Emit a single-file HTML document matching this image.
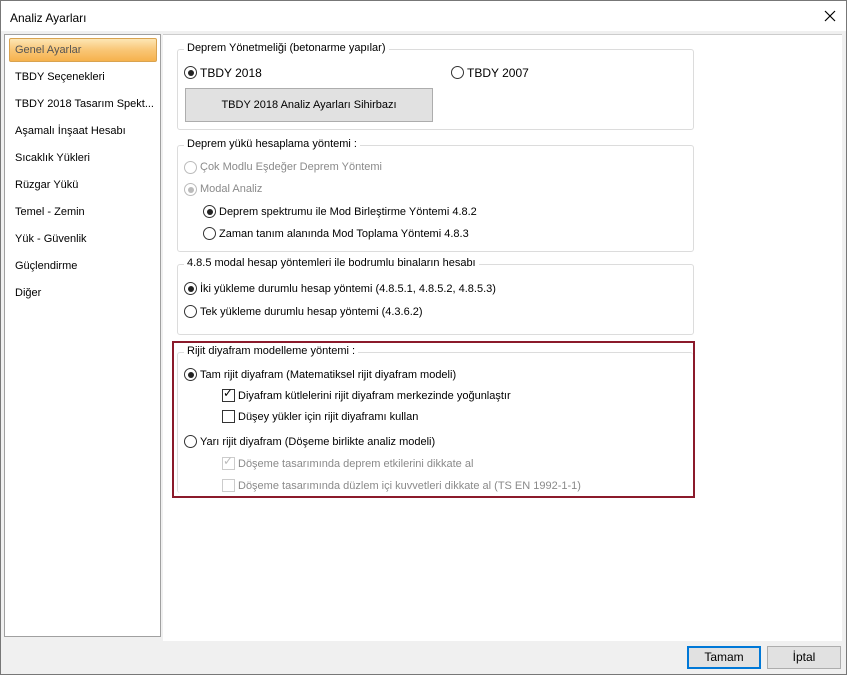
<!DOCTYPE html><html><head><style>
body{margin:0;width:847px;height:675px;overflow:hidden;background:#f0f0f0;font-family:"Liberation Sans",sans-serif;font-size:11px;color:#000;position:relative}
.a{position:absolute}
.win{left:0;top:0;width:845px;height:673px;border:1px solid #777;background:#f0f0f0}
.title{left:1px;top:1px;width:845px;height:30px;background:#fff}
.side{left:4px;top:34px;width:155px;height:601px;background:#fff;border:1px solid #a0a0a0}
.si{position:absolute;left:10px;font-size:11px;white-space:nowrap}
.sel{left:4px;top:3px;width:146px;height:22px;border:1px solid #d9a350;border-radius:2px;background:linear-gradient(#fde6b5,#f9c676 50%,#f6b24d)}
.main{left:163px;top:34px;width:679px;height:606px;background:#fff;border-top:1px solid #ccc}
.g{position:absolute;border:1px solid #dcdcdc;border-radius:3px}
.gt{position:absolute;top:-8px;left:6px;background:#fff;padding:0 3px}
.r{position:absolute;width:11px;height:11px;border:1px solid #333;border-radius:50%;background:#fff}
.r.on::after{content:"";position:absolute;left:2.5px;top:2.5px;width:6px;height:6px;border-radius:50%;background:#222}
.r.dis{border-color:#bbb}.r.dis.on::after{background:#bbb}
.c{position:absolute;width:11px;height:11px;border:1px solid #333;background:#fff}
.c.dis{border-color:#ccc}
.t{position:absolute;white-space:nowrap}
.d{color:#8a8a8a}
.btn{position:absolute;background:#e1e1e1;border:1px solid #adadad;text-align:center}
</style></head><body>
<div class="a win"></div>
<div class="a title"></div>
<div class="t" style="left:10px;top:11px;font-size:12px">Analiz Ayarları</div>
<svg class="a" style="left:824px;top:10px" width="12" height="12"><path d="M1 1L11 11M11 1L1 11" stroke="#000" stroke-width="1.2"/></svg>
<div class="a side">
<div class="a sel"></div>
<div class="si" style="top:9px;color:#555">Genel Ayarlar</div>
<div class="si" style="top:36px">TBDY Seçenekleri</div>
<div class="si" style="top:63px">TBDY 2018 Tasarım Spekt...</div>
<div class="si" style="top:90px">Aşamalı İnşaat Hesabı</div>
<div class="si" style="top:117px">Sıcaklık Yükleri</div>
<div class="si" style="top:144px">Rüzgar Yükü</div>
<div class="si" style="top:171px">Temel - Zemin</div>
<div class="si" style="top:198px">Yük - Güvenlik</div>
<div class="si" style="top:225px">Güçlendirme</div>
<div class="si" style="top:252px">Diğer</div>
</div>
<div class="a main"></div>

<div class="g" style="left:177px;top:49px;width:515px;height:79px"><div class="gt">Deprem Yönetmeliği (betonarme yapılar)</div></div>
<div class="r on" style="left:184px;top:66px"></div><div class="t" style="left:200px;top:66px;font-size:12px">TBDY 2018</div>
<div class="r" style="left:451px;top:66px"></div><div class="t" style="left:467px;top:66px;font-size:12px">TBDY 2007</div>
<div class="btn" style="left:185px;top:88px;width:246px;height:32px;line-height:32px">TBDY 2018 Analiz Ayarları Sihirbazı</div>

<div class="g" style="left:177px;top:145px;width:515px;height:105px"><div class="gt">Deprem yükü hesaplama yöntemi :</div></div>
<div class="r dis" style="left:184px;top:161px"></div><div class="t d" style="left:200px;top:161px">Çok Modlu Eşdeğer Deprem Yöntemi</div>
<div class="r dis on" style="left:184px;top:183px"></div><div class="t d" style="left:200px;top:183px">Modal Analiz</div>
<div class="r on" style="left:203px;top:205px"></div><div class="t" style="left:219px;top:206px">Deprem spektrumu ile Mod Birleştirme Yöntemi 4.8.2</div>
<div class="r" style="left:203px;top:227px"></div><div class="t" style="left:219px;top:228px">Zaman tanım alanında Mod Toplama Yöntemi 4.8.3</div>

<div class="g" style="left:177px;top:264px;width:515px;height:69px"><div class="gt">4.8.5 modal hesap yöntemleri ile bodrumlu binaların hesabı</div></div>
<div class="r on" style="left:184px;top:282px"></div><div class="t" style="left:200px;top:283px">İki yükleme durumlu hesap yöntemi (4.8.5.1, 4.8.5.2, 4.8.5.3)</div>
<div class="r" style="left:184px;top:305px"></div><div class="t" style="left:200px;top:306px">Tek yükleme durumlu hesap yöntemi (4.3.6.2)</div>

<div class="a" style="left:172px;top:341px;width:519px;height:153px;border:2px solid #8b1a2b"></div>
<div class="g" style="left:177px;top:352px;width:515px;height:140px;border-bottom:none;border-right:none"><div class="gt">Rijit diyafram modelleme yöntemi  :</div></div>
<div class="r on" style="left:184px;top:368px"></div><div class="t" style="left:200px;top:369px">Tam rijit diyafram (Matematiksel rijit diyafram modeli)</div>
<div class="c" style="left:222px;top:389px"></div><div class="t" style="left:223px;top:386px;font-size:12px">✓</div><div class="t" style="left:238px;top:390px">Diyafram kütlelerini rijit diyafram merkezinde yoğunlaştır</div>
<div class="c" style="left:222px;top:410px"></div><div class="t" style="left:238px;top:411px">Düşey yükler için rijit diyaframı kullan</div>
<div class="r" style="left:184px;top:435px"></div><div class="t" style="left:200px;top:436px">Yarı rijit diyafram (Döşeme birlikte analiz modeli)</div>
<div class="c dis" style="left:222px;top:457px"></div><div class="t" style="left:223px;top:454px;font-size:12px;color:#bbb">✓</div><div class="t d" style="left:238px;top:458px">Döşeme tasarımında deprem etkilerini dikkate al</div>
<div class="c dis" style="left:222px;top:479px"></div><div class="t d" style="left:238px;top:480px">Döşeme tasarımında düzlem içi kuvvetleri dikkate al (TS EN 1992-1-1)</div>

<div class="btn" style="left:687px;top:646px;width:70px;height:19px;line-height:19px;border:2px solid #0078d7;font-size:12px">Tamam</div>
<div class="btn" style="left:767px;top:646px;width:72px;height:21px;line-height:21px;font-size:12px">İptal</div>
</body></html>
